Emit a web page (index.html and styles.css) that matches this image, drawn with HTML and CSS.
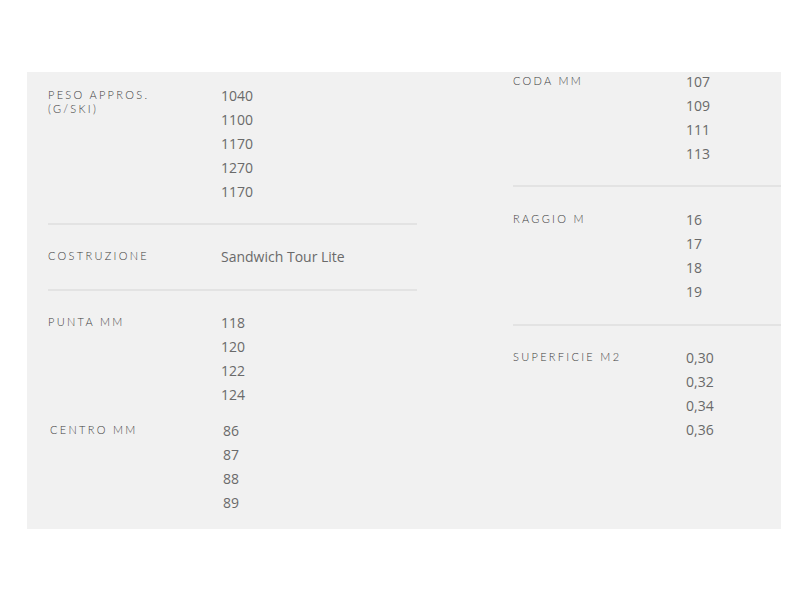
FILE: index.html
```html
<!DOCTYPE html>
<html lang="it">
<head>
<meta charset="utf-8">
<title>Specifiche</title>
<link rel="stylesheet" href="styles.css">
</head>
<body>
<div class="panel">
  <div class="col col-left">
    <div class="row row-first">
      <div class="label">PESO APPROS.<br>(G/SKI)</div>
      <ul class="values"><li>1040</li><li>1100</li><li>1170</li><li>1270</li><li>1170</li></ul>
    </div>
    <div class="row">
      <div class="label">COSTRUZIONE</div>
      <ul class="values"><li>Sandwich Tour Lite</li></ul>
    </div>
    <div class="row row-open">
      <div class="label">PUNTA MM</div>
      <ul class="values"><li>118</li><li>120</li><li>122</li><li>124</li></ul>
    </div>
    <div class="row row-shift">
      <div class="label">CENTRO MM</div>
      <ul class="values"><li>86</li><li>87</li><li>88</li><li>89</li></ul>
    </div>
  </div>
  <div class="col col-right">
    <div class="row row-first">
      <div class="label">CODA MM</div>
      <ul class="values"><li>107</li><li>109</li><li>111</li><li>113</li></ul>
    </div>
    <div class="row row-mid">
      <div class="label">RAGGIO M</div>
      <ul class="values"><li>16</li><li>17</li><li>18</li><li>19</li></ul>
    </div>
    <div class="row row-end">
      <div class="label">SUPERFICIE M2</div>
      <ul class="values"><li>0,30</li><li>0,32</li><li>0,34</li><li>0,36</li></ul>
    </div>
  </div>
</div>
</body>
</html>
```
FILE: styles.css
```css
* { box-sizing: border-box; }
html, body { margin: 0; padding: 0; background: #ffffff; }
body { width: 800px; height: 600px; }

.panel {
  margin: 72px 0 0 27px;
  width: 754px;
  height: 457px;
  background: #f1f1f1;
  display: flex;
  gap: 96px;
  padding-left: 21px;
  font-family: "Open Sans", "Liberation Sans", sans-serif;
}

.col-left { width: 369px; padding-top: 12px; }
.col-right { flex: 1; margin-top: -2px; }

.row {
  display: flex;
  padding: 20px 0 20px;
  border-bottom: 2px solid #e3e3e3;
}
.row-first { padding-top: 0; padding-bottom: 19px; }
.row-mid { padding-top: 21px; }
.row-open { border-bottom: none; padding-bottom: 0; }
.row-shift { border-bottom: none; padding: 12px 0 0 2px; }
.row-end { border-bottom: none; }

.label {
  width: 173px;
  flex: none;
  font-family: Lato, "Open Sans", sans-serif;
  font-weight: 300;
  font-size: 11px;
  line-height: 14px;
  letter-spacing: 2.3px;
  color: #3c3c3c;
  padding-top: 4px;
}

.values {
  list-style: none;
  margin: 0;
  padding: 0;
  font-size: 14px;
  line-height: 24px;
  color: #6a6a6a;
}
```
